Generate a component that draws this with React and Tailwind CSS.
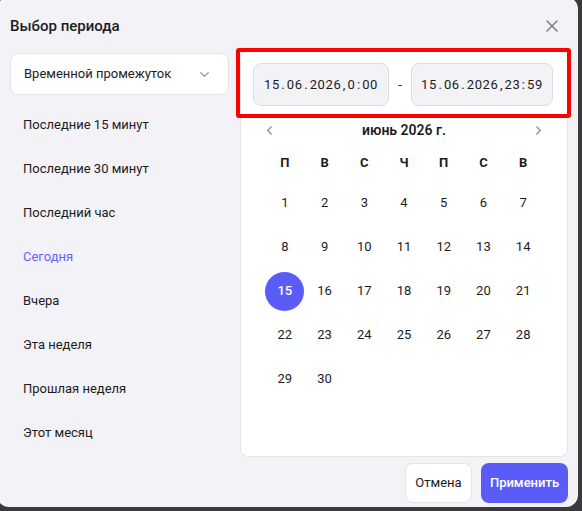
import React from "react";
import { ChevronDown, ChevronLeft, ChevronRight, X } from "lucide-react";

const presets = [
  "Последние 15 минут",
  "Последние 30 минут",
  "Последний час",
  "Сегодня",
  "Вчера",
  "Эта неделя",
  "Прошлая неделя",
  "Этот месяц",
];

const weekdays = ["П", "В", "С", "Ч", "П", "С", "В"];

function DateText({ parts }) {
  return (
    <span className="flex items-center tracking-[0.6px]">
      {parts.map((p, i) =>
        /^[0-9]+$/.test(p) ? (
          <span key={i}>{p}</span>
        ) : (
          <span key={i} className="px-[1.5px]">
            {p}
          </span>
        )
      )}
    </span>
  );
}

export default function App() {
  const days = [];
  for (let d = 1; d <= 30; d++) days.push(d);
  return (
    <div
      className="w-[582px] h-[511px] bg-[#3a3a3c] overflow-hidden"
      style={{ fontFamily: "Roboto, 'Noto Sans', sans-serif" }}
    >
      <div className="-ml-[3px] -mt-[3px] w-[581px] h-[510px] rounded-[12px] bg-[#f2f2f7] pl-[13px] pr-[10px] pt-[7px] text-[#1c1c1e]">
        <div className="h-[44px] flex items-center justify-between">
          <div className="text-[15px] font-medium">Выбор периода</div>
          <div className="w-[20px] h-[20px] mr-[6px] flex items-center justify-center text-[#7a7a82]">
            <X size={20} strokeWidth={1.8} />
          </div>
        </div>
        <div className="mt-[3px] flex gap-[11px]">
          <div className="w-[219px] flex flex-col">
            <div className="mt-[2px] h-[42px] rounded-[8px] bg-white border border-[#e3e3e8] flex items-center justify-between pl-[13px] pr-[16px] text-[13px]">
              <span>Временной промежуток</span>
              <ChevronDown size={15} strokeWidth={1.8} className="text-[#8e8e93]" />
            </div>
            <div className="mt-[8px] flex flex-col">
              {presets.map((p) => (
                <div
                  key={p}
                  className={
                    "h-[44px] flex items-center px-[13px] text-[13px] " +
                    (p === "Сегодня" ? "text-[#6663f6]" : "text-[#1c1c1e]")
                  }
                >
                  {p}
                </div>
              ))}
            </div>
          </div>
          <div className="flex flex-col">
            <div className="relative w-[328px] h-[406px] bg-white rounded-[8px] border border-[#e3e3e8]">
              <div className="pt-[11px] pl-[12px] pr-[13px] flex items-center">
                <div className="w-[136px] h-[43px] rounded-[8px] bg-[#f2f2f7] border border-[#dcdce2] flex items-center justify-center text-[13px]">
                  <DateText parts={["15", ".", "06", ".", "2026", ",", "0", ":", "00"]} />
                </div>
                <div className="w-[22px] text-center text-[13px]">-</div>
                <div className="w-[142px] h-[43px] rounded-[8px] bg-[#f2f2f7] border border-[#dcdce2] flex items-center justify-center text-[13px]">
                  <DateText parts={["15", ".", "06", ".", "2026", ",", "23", ":", "59"]} />
                </div>
              </div>
              <div className="mt-[12px] h-[24px] flex items-center justify-between pl-[21px] pr-[21px]">
                <ChevronLeft size={15} strokeWidth={1.8} className="text-[#8e8e93]" />
                <span className="text-[14px] font-semibold">июнь 2026 г.</span>
                <ChevronRight size={15} strokeWidth={1.8} className="text-[#8e8e93]" />
              </div>
              <div className="mt-[3px] px-[24px] grid grid-cols-7">
                {weekdays.map((w, i) => (
                  <div key={i} className="h-[36px] flex items-center justify-center text-[13px] font-bold">
                    {w}
                  </div>
                ))}
                {days.map((d) => (
                  <div key={d} className="h-[44px] flex items-center justify-center text-[13px]">
                    {d === 15 ? (
                      <span className="w-[39px] h-[39px] rounded-full bg-[#5b5cf8] text-white flex items-center justify-center font-medium">
                        15
                      </span>
                    ) : (
                      d
                    )}
                  </div>
                ))}
              </div>
              <div className="absolute -left-[5px] -top-[4px] w-[335px] h-[70px] border-4 border-[#ff0000] rounded-[3px]" />
            </div>
            <div className="mt-[6px] flex justify-end gap-[9px]">
              <div className="w-[67px] h-[40px] rounded-[8px] bg-white border border-[#e3e3e8] flex items-center justify-center text-[13px]">
                Отмена
              </div>
              <div className="w-[87px] h-[40px] rounded-[8px] bg-[#5b5cf8] text-white flex items-center justify-center text-[13px] font-medium">
                Применить
              </div>
            </div>
          </div>
        </div>
      </div>
    </div>
  );
}
